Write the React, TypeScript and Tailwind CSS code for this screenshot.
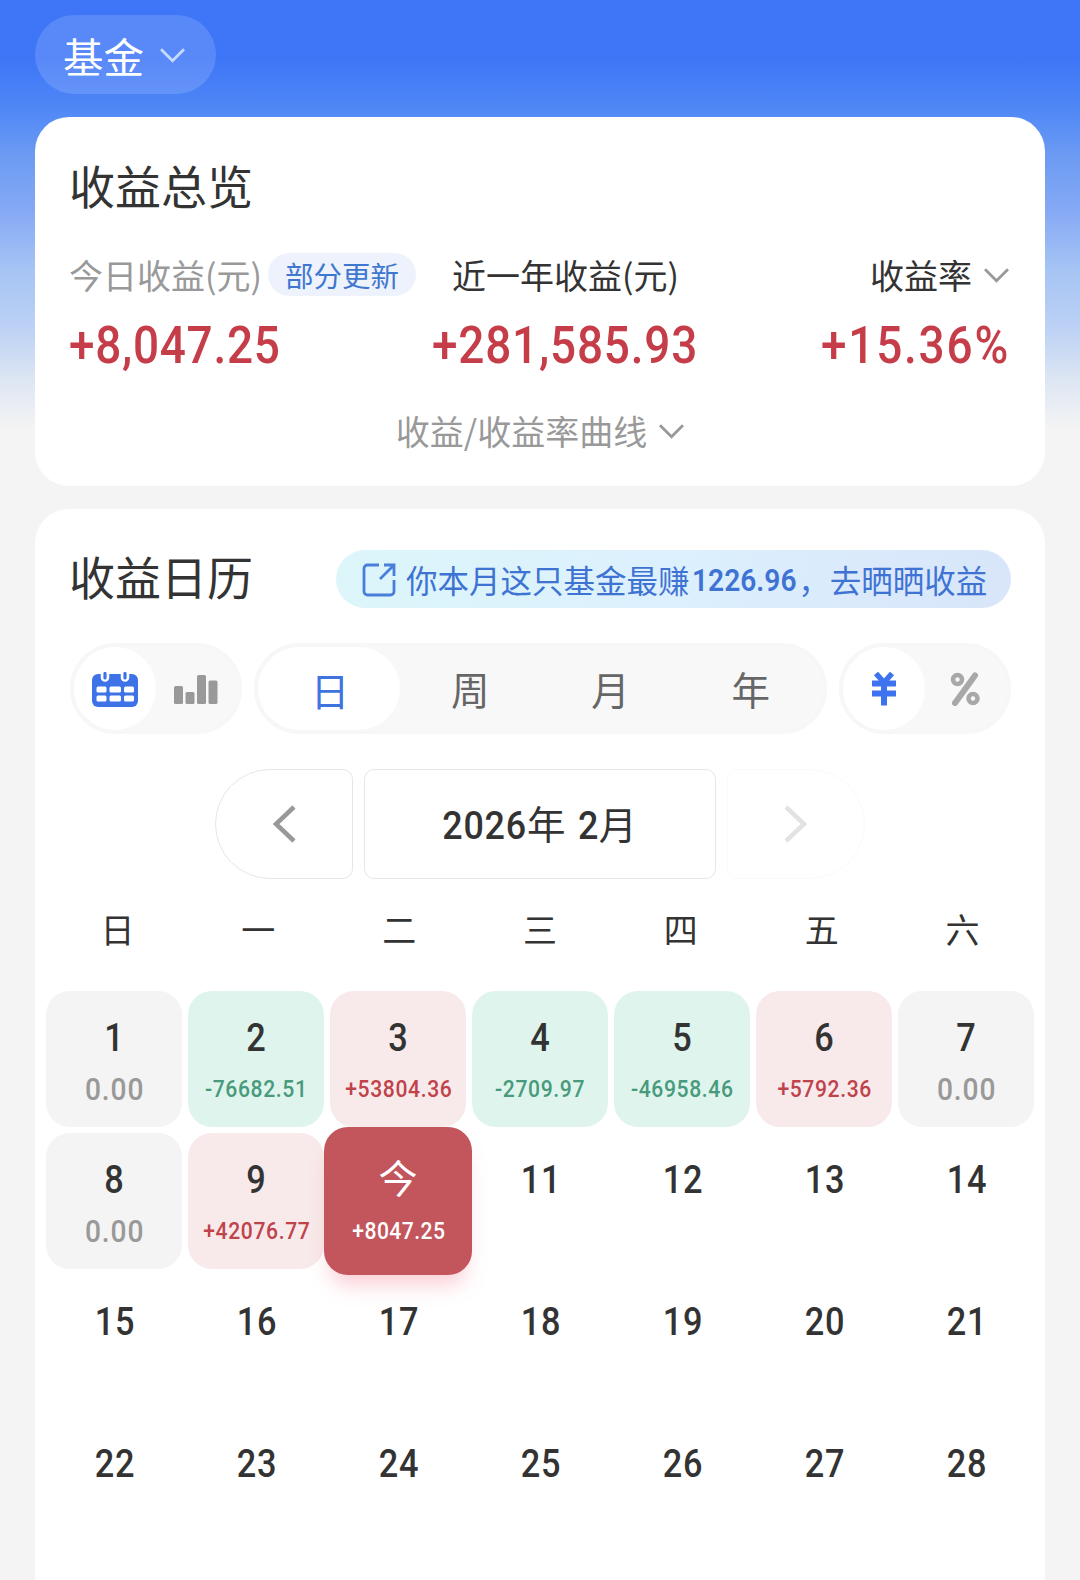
import React from "react";

const CJK = "font-['Noto_Sans_CJK_SC',sans-serif]";
const NUM = "font-['Roboto','Noto_Sans_CJK_SC',sans-serif]";

function Chevron({ className }: { className: string }) {
  return (
    <svg width="25" height="15" viewBox="0 0 25 15" fill="none" className={className}>
      <path d="M1 1.2 12.5 12.8 24 1.2" stroke="currentColor" strokeWidth="2.8" />
    </svg>
  );
}

function CalendarIcon() {
  return (
    <svg width="48" height="36" viewBox="0 0 48 36" fill="none">
      <rect x="1" y="2" width="46" height="33" rx="6" fill="#3e73e8" />
      <path d="M14 0v5.500M34 0v5.500" stroke="#fff" strokeWidth="8.500" strokeLinecap="round" />
      <path d="M14 1.500v4.500M34 1.500v4.500" stroke="#3e73e8" strokeWidth="3.200" strokeLinecap="round" />
      {[5.5, 18.5, 33].map((x) =>
        [14.5, 23.500].map((y) => <rect key={`${x}-${y}`} x={x} y={y} width={x === 18.5 ? 11.500 : 10} height="6" rx="1.500" fill="#fff" />),
      )}
    </svg>
  );
}

function BarsIcon() {
  return (
    <svg width="46" height="31" viewBox="0 0 46 31" fill="#999">
      <rect x="1" y="12" width="9" height="18" rx="1.500" />
      <rect x="12.500" y="18" width="9" height="12" rx="1.500" />
      <rect x="24" y="1" width="9" height="29" rx="1.500" />
      <rect x="35.500" y="6.500" width="9" height="23.500" rx="1.500" />
    </svg>
  );
}

function ShareIcon() {
  return (
    <svg width="34" height="34" viewBox="0 0 34 34" fill="none" stroke="#4a7edb" strokeWidth="2.800" className="mt-px">
      <path d="M17 2H5.500A3.500 3.500 0 0 0 2 5.500V28.500a3.500 3.500 0 0 0 3.500 3.500h23a3.500 3.500 0 0 0 3.500-3.500V17" />
      <path d="M22 2h10v11M31.500 2.500 18 16" />
    </svg>
  );
}

type Day = { d: string; v?: string };
const days: Day[] = [
  { d: "1", v: "0.00" },
  { d: "2", v: "-76682.51" },
  { d: "3", v: "+53804.36" },
  { d: "4", v: "-2709.97" },
  { d: "5", v: "-46958.46" },
  { d: "6", v: "+5792.36" },
  { d: "7", v: "0.00" },
  { d: "8", v: "0.00" },
  { d: "9", v: "+42076.77" },
  { d: "今", v: "+8047.25" },
  ...Array.from({ length: 18 }, (_, i) => ({ d: String(i + 11) })),
];

function tone(day: Day) {
  if (day.d === "今") return "relative z-10 -m-[6px] pt-[6px] h-[148px] rounded-[24px] bg-[#c3555c] text-white shadow-[0_16px_20px_-6px_rgba(240,120,140,0.35)]";
  if (!day.v) return "h-[136px] text-[#333]";
  if (day.v[0] === "-") return "h-[136px] rounded-[24px] bg-[#dff4ec] text-[#333]";
  if (day.v[0] === "+") return "h-[136px] rounded-[24px] bg-[#f8eaea] text-[#333]";
  return "h-[136px] rounded-[24px] bg-[#f4f4f4] text-[#333]";
}

function amountTone(day: Day) {
  if (day.d === "今") return "text-[24px] font-medium tracking-[0.5px] text-white";
  if (day.v![0] === "-") return "text-[24px] font-medium tracking-[0.7px] text-[#479a7c]";
  if (day.v![0] === "+") return "text-[24px] font-medium tracking-[0.7px] text-[#c0424a]";
  return "text-[32px] font-medium tracking-[1px] text-[#999]";
}

function DayCell({ day }: { day: Day }) {
  return (
    <div className={`flex flex-col items-center ${tone(day)}`}>
      <div className={`mt-[24px] h-[46px] leading-[46px] ${day.d === "今" ? "text-[39px] font-normal" : "scale-x-88 pl-[2px] text-[39px] font-medium tracking-[1px]"}`}>{day.d}</div>
      {day.v && <div className={`mt-[8px] h-[40px] scale-x-88 pl-px leading-[40px] whitespace-nowrap ${amountTone(day)}`}>{day.v}</div>}
    </div>
  );
}

export default function App() {
  return (
    <div className={`h-[1580px] w-[1080px] overflow-hidden bg-[#f4f4f4] bg-[linear-gradient(180deg,#3e76f7_0px,#3e76f7_60px,#5088f6_110px,#6b9bf2_155px,#85a9f5_210px,#a6c4f4_270px,#bdd2f5_330px,#dde6f3_380px,#f4f4f4_430px)] px-[35px] pt-[15px] ${CJK}`}>
      <div className="flex h-[79px] w-[181px] items-center rounded-full bg-white/14 pl-[28px] text-white">
        <span className="pt-[2px] text-[40.500px] leading-[79px]">基金</span>
        <Chevron className="mt-[2px] ml-[16px] text-[#c5dbfb]" />
      </div>

      <section className="mt-[23px] h-[369px] rounded-[34px] bg-white px-[35px] pt-[39px]">
        <h1 className="-ml-px h-[56px] text-[46px] leading-[56px] text-[#333]">收益总览</h1>
        <div className="mt-[41px] flex h-[43px] items-center text-[34px] leading-[43px]">
          <span className="-ml-px w-[199px] whitespace-nowrap text-[#999]">今日收益(元)</span>
          <span className="flex h-[43px] w-[148px] items-center justify-center rounded-full bg-[#edf2fd] text-[28.500px] text-[#3f77cf]">部分更新</span>
          <span className="ml-[36px] whitespace-nowrap text-[#333]">近一年收益(元)</span>
          <span className="ml-auto text-[#333]">收益率</span>
          <Chevron className="mt-[2px] mr-px ml-[12px] text-[#999]" />
        </div>
        <div className={`mt-[20px] flex h-[60px] items-center text-[51px] leading-[60px] font-medium whitespace-nowrap text-[#c53d48] ${NUM}`}>
          <span className="-ml-px w-[363px]">
            <span className="inline-block origin-left scale-x-90 tracking-[0.8px]">+8,047.25</span>
          </span>
          <span className="w-[260px]">
            <span className="inline-block origin-left scale-x-90 tracking-[0.9px]">+281,585.93</span>
          </span>
          <span className="ml-auto origin-right scale-x-90 tracking-[2px]">+15.36%</span>
        </div>
        <div className="mt-[31px] flex h-[48px] items-center justify-center text-[34px] leading-[48px] text-[#999]">
          收益/收益率曲线
          <Chevron className="ml-[12px]" />
        </div>
      </section>

      <section className="mt-[23px] h-[1100px] rounded-t-[34px] bg-white pt-[41px]">
        <div className="flex h-[58px] items-center justify-between px-[35px] pr-[34px]">
          <h2 className="-mt-[8px] -ml-px text-[46px] leading-[56px] text-[#333]">收益日历</h2>
          <div className="flex h-[58px] w-[675px] items-center rounded-full bg-[linear-gradient(100deg,#dcf6fa,#dcf0fd_50%,#d8e5fa)] pl-[26px] text-[31.500px] whitespace-nowrap text-[#3f73d3]">
            <ShareIcon />
            <span className="mt-[2px] ml-[10px]">你本月这只基金最赚</span>
            <span className={`mt-[2px] -mr-[12px] ml-[2px] origin-left scale-x-88 text-[32px] font-semibold ${NUM}`}>1226.96</span>
            <span className="mt-[2px]">，去晒晒收益</span>
          </div>
        </div>

        <div className="mt-[35px] flex h-[91px] justify-between px-[35px] pr-[34px]">
          <div className="flex w-[172px] rounded-full border-4 border-[#f7f7f7] bg-[#f8f8f8]">
            <div className="flex h-[83px] w-[82px] items-center justify-center rounded-full bg-white pt-[2px]"><CalendarIcon /></div>
            <div className="flex h-[83px] w-[80px] items-center justify-center pt-px"><BarsIcon /></div>
          </div>
          <div className="flex w-[573px] rounded-full border-4 border-[#f7f7f7] bg-[#f8f8f8] pr-[2px] text-[38.500px] leading-[83px] text-[#666]">
            {["日", "周", "月", "年"].map((t, i) => (
              <div key={t} className={`flex-1 rounded-full text-center ${i === 0 ? "bg-white pt-px pl-[2px] text-[#3e73e0]" : ""}`}>{t}</div>
            ))}
          </div>
          <div className="flex w-[172px] rounded-full border-4 border-[#f7f7f7] bg-[#f8f8f8]">
            <div className="flex h-[83px] w-[82px] items-center justify-center rounded-full bg-white">
              <svg width="26" height="34" viewBox="0 0 26 34" fill="none" stroke="#3e73f0" strokeWidth="6" strokeLinejoin="round">
                <path d="M5 1.500 13 10.500 21 1.500" strokeWidth="5.500" />
                <path d="M1 11.500H25M1 21.500H25M13 10V33.500" />
              </svg>
            </div>
            <div className="flex h-[83px] w-[80px] items-center justify-center">
              <svg width="30" height="34" viewBox="0 0 30 34" fill="none" stroke="#a8a8a8" strokeWidth="4.500">
                <circle cx="7.500" cy="7.500" r="4.500" />
                <circle cx="23" cy="26.500" r="4.500" />
                <path d="M25 3.500 5 31" strokeWidth="6" strokeLinecap="round" />
              </svg>
            </div>
          </div>
        </div>

        <div className="mt-[35px] flex h-[110px] justify-center gap-[11px]">
          <div className="flex w-[138px] items-center justify-center rounded-l-[55px] rounded-r-[10px] border border-[#e6e6e6]">
            <svg width="24" height="38" viewBox="0 0 24 38" fill="none" stroke="#999" strokeWidth="4.500"><path d="M22 2 4 19 22 36" /></svg>
          </div>
          <div className={`flex w-[352px] items-center justify-center rounded-[10px] border border-[#e6e6e6] pt-[4px] pr-[8px] text-[39px] font-medium text-[#333] ${NUM}`}>
            <span className="inline-block origin-right scale-x-92 tracking-[0.8px]">2026</span>
            <span className="text-[38.500px] font-normal">年</span>
            <span className="ml-[11px] inline-block scale-x-92">2</span>
            <span className="text-[38px] font-normal">月</span>
          </div>
          <div className="flex w-[138px] items-center justify-center rounded-l-[10px] rounded-r-[55px] border border-[#fafafa]">
            <svg width="24" height="38" viewBox="0 0 24 38" fill="none" stroke="#e3e3e3" strokeWidth="4.500"><path d="M2 2 20 19 2 36" /></svg>
          </div>
        </div>

        <div className="mt-[27px] grid h-[46px] grid-cols-7 px-[12px] text-center text-[34px] leading-[46px] text-[#333]">
          {["日", "一", "二", "三", "四", "五", "六"].map((w) => <div key={w}>{w}</div>)}
        </div>

        <div className={`mt-[39px] grid grid-cols-7 gap-[6px] pr-[11px] pl-[11px] ${NUM}`}>
          {days.map((day) => <DayCell key={day.d} day={day} />)}
        </div>
      </section>
    </div>
  );
}
